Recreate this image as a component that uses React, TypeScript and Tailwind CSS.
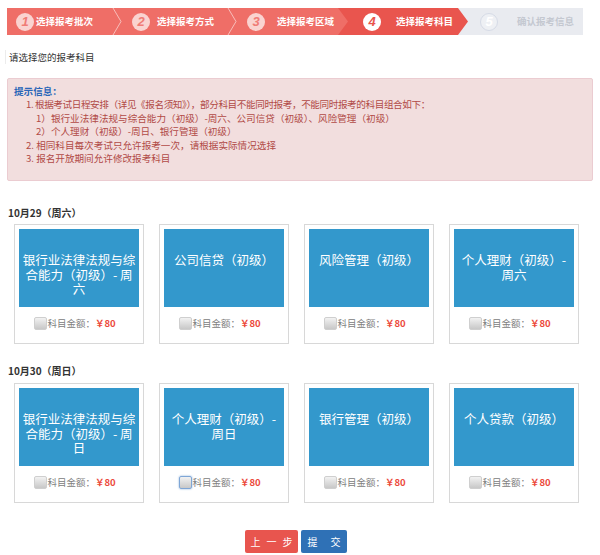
import React from 'react';

const font = { fontFamily: '"Noto Sans CJK SC", "Noto Sans", sans-serif' };

function Chevron() {
  return (
    <svg
      className="absolute right-[-4px] top-0 z-10"
      width="10"
      height="27"
      viewBox="0 0 10 27"
      fill="none"
    >
      <polyline points="1,0 9,13.5 1,27" stroke="#ffffff" strokeOpacity="0.55" strokeWidth="1" />
    </svg>
  );
}

function StepNum({ n, active, done }: { n: string; active?: boolean; done?: boolean }) {
  return (
    <span
      className={
        'flex h-[18px] w-[18px] shrink-0 items-center justify-center rounded-full text-[13px] italic leading-none ' +
        (active
          ? 'bg-white text-[#e9544d]'
          : done
            ? 'bg-[#fad3d0] text-[#f07c76]'
            : 'border border-[#d6dbe6] bg-[#eef0f4] text-white')
      }
      style={{ fontFamily: '"Liberation Sans", sans-serif' }}
    >
      {n}
    </span>
  );
}

function Checkbox({ focused }: { focused?: boolean }) {
  return (
    <span
      className={
        'inline-block h-[13px] w-[13px] shrink-0 rounded-[2px] border bg-linear-to-b from-[#f2f2f2] to-[#c8c8c8] ' +
        (focused ? 'border-[#7fa6d6] shadow-[0_0_2px_#7fa6d6]' : 'border-[#cfcfcf]')
      }
    />
  );
}

function SubjectCard({ lines, focused }: { lines: string[]; focused?: boolean }) {
  return (
    <div className="flex h-[120px] w-[130px] flex-col border border-[#d8d8d8] p-[4px]">
      <div className="h-[78px] bg-[#3398cc] px-[1px] pt-[24px] text-center text-[12.5px] leading-[14.5px] text-white">
        {lines.map((l, i) => (
          <div key={i} className="whitespace-nowrap">
            {l}
          </div>
        ))}
      </div>
      <div className="flex flex-1 items-center justify-center pr-[8px] text-[9.5px]">
        <Checkbox focused={focused} />
        <span className="text-[#808080]">科目金额：</span>
        <span className="font-bold text-[#ec4a3c]">￥80</span>
      </div>
    </div>
  );
}

export default function App() {
  return (
    <div className="h-[555px] w-[600px] bg-white" style={font}>
      {/* Steps */}
      <div className="ml-[7px] mt-[8px] flex h-[27px] w-[576px] bg-[#e9ebf0] text-[9.5px] font-bold text-white">
        <div className="relative flex w-[111px] items-center gap-[2px] bg-[#ef6e67] pl-[9px]">
          <StepNum n="1" done />
          <span>选择报考批次</span>
          <Chevron />
        </div>
        <div className="relative flex w-[115px] items-center gap-[7px] bg-[#ef6e67] pl-[14px]">
          <StepNum n="2" done />
          <span>选择报考方式</span>
          <Chevron />
        </div>
        <div className="relative flex w-[115px] items-center gap-[12px] bg-[#ef6e67] pl-[14px]">
          <StepNum n="3" done />
          <span>选择报考区域</span>
        </div>
        <div className="relative z-20 -ml-[10px] flex w-[130px] items-center gap-[15px] bg-[#e9554e] pl-[25px] [clip-path:polygon(0_0,calc(100%_-_10px)_0,100%_50%,calc(100%_-_10px)_100%,0_100%,10px_50%)]">
          <StepNum n="4" active />
          <span>选择报考科目</span>
        </div>
        <div className="flex flex-1 items-center gap-[19px] pl-[12px] text-[#c4c8d0]">
          <StepNum n="5" />
          <span>确认报考信息</span>
        </div>
      </div>

      <div className="ml-[5px] mt-[15px] border-l border-[#ececec] pl-[3px] text-[9.5px] leading-[14px] text-[#333]">
        请选择您的报考科目
      </div>

      {/* Tips */}
      <div className="mx-[7px] mt-[14px] rounded-[2px] border border-[#ebccd1] bg-[#f2dede] pb-[15px] pl-[6px] pt-[6px] text-[9.6px] leading-[13.4px] text-[#b14a46]">
        <div className="font-bold text-[#2a66b8]">提示信息：</div>
        <div className="pl-[12px] tracking-[-0.4px]">1. 根据考试日程安排（详见《报名须知》），部分科目不能同时报考，不能同时报考的科目组合如下：</div>
        <div className="pl-[22px]">1）银行业法律法规与综合能力（初级）-周六、公司信贷（初级）、风险管理（初级）</div>
        <div className="pl-[22px]">2）个人理财（初级）-周日、银行管理（初级）</div>
        <div className="pl-[12px]">2. 相同科目每次考试只允许报考一次，请根据实际情况选择</div>
        <div className="pl-[12px]">3. 报名开放期间允许修改报考科目</div>
      </div>

      {/* Day 1 */}
      <div className="ml-[8px] mt-[25px] text-[10px] font-bold leading-[14px] text-[#333]">10月29（周六）</div>
      <div className="ml-[14px] mt-[4px] flex gap-[15px]">
        <SubjectCard lines={['银行业法律法规与综', '合能力（初级）- 周', '六']} />
        <SubjectCard lines={['公司信贷（初级）']} />
        <SubjectCard lines={['风险管理（初级）']} />
        <SubjectCard lines={['个人理财（初级）-', '周六']} />
      </div>

      {/* Day 2 */}
      <div className="ml-[8px] mt-[20px] text-[10px] font-bold leading-[14px] text-[#333]">10月30（周日）</div>
      <div className="ml-[14px] mt-[5px] flex gap-[15px]">
        <SubjectCard lines={['银行业法律法规与综', '合能力（初级）- 周', '日']} />
        <SubjectCard lines={['个人理财（初级）-', '周日']} focused />
        <SubjectCard lines={['银行管理（初级）']} />
        <SubjectCard lines={['个人贷款（初级）']} />
      </div>

      {/* Buttons */}
      <div className="ml-[245px] mt-[27px] flex gap-[3px] text-[10px] text-white">
        <button className="flex h-[23px] w-[53px] items-center justify-center gap-[6px] whitespace-nowrap rounded-[2px] bg-[#e8554e]">
          <span>上</span>
          <span>一</span>
          <span>步</span>
        </button>
        <button className="flex h-[23px] w-[46px] items-center justify-center gap-[13px] whitespace-nowrap rounded-[2px] bg-[#2f71b6]">
          <span>提</span>
          <span>交</span>
        </button>
      </div>
    </div>
  );
}
